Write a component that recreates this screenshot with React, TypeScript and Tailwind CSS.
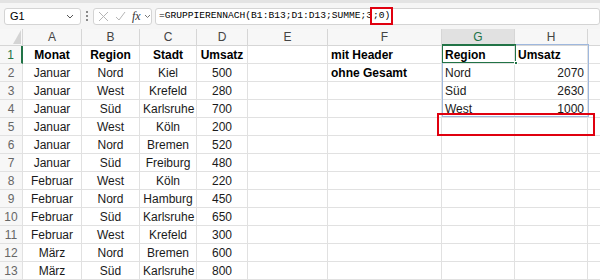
import React from 'react';

const cols = ['A', 'B', 'C', 'D', 'E', 'F', 'G', 'H'];

const rows: string[][] = [
  ['Monat', 'Region', 'Stadt', 'Umsatz', '', 'mit Header', 'Region', 'Umsatz'],
  ['Januar', 'Nord', 'Kiel', '500', '', 'ohne Gesamt', 'Nord', '2070'],
  ['Januar', 'West', 'Krefeld', '280', '', '', 'Süd', '2630'],
  ['Januar', 'Süd', 'Karlsruhe', '700', '', '', 'West', '1000'],
  ['Januar', 'West', 'Köln', '200', '', '', '', ''],
  ['Januar', 'Nord', 'Bremen', '520', '', '', '', ''],
  ['Januar', 'Süd', 'Freiburg', '480', '', '', '', ''],
  ['Februar', 'West', 'Köln', '220', '', '', '', ''],
  ['Februar', 'Nord', 'Hamburg', '450', '', '', '', ''],
  ['Februar', 'Süd', 'Karlsruhe', '650', '', '', '', ''],
  ['Februar', 'West', 'Krefeld', '300', '', '', '', ''],
  ['März', 'Nord', 'Bremen', '600', '', '', '', ''],
  ['März', 'Süd', 'Karlsruhe', '800', '', '', '', ''],
];

const gridCols = 'grid-cols-[23px_59px_58px_57px_51px_80px_114px_73px_73px_12px]';

function cellClass(r: number, c: number) {
  const base = 'h-[18px] border-r border-b border-[#e1e1e1] px-[3px] leading-[18px] whitespace-nowrap overflow-visible';
  if (c <= 3) return `${base} text-center ${r === 0 ? 'font-bold text-black' : 'text-[#1a1a1a]'}`;
  if (c === 5) return `${base} font-bold text-black`;
  if (c === 6) return `${base} ${r === 0 ? 'font-bold text-black' : 'text-[#1a1a1a]'}`;
  if (c === 7) return `${base} ${r === 0 ? 'font-bold text-black' : 'text-right text-[#1a1a1a]'}`;
  return base;
}

export default function App() {
  return (
    <div className="relative w-[600px] h-[280px] overflow-hidden bg-[#f5f5f5] font-['Liberation_Sans',Arial,sans-serif]">
      <div className="h-[3px] bg-[#e3e3e3]" />

      {/* Formula bar */}
      <div className="flex items-center h-[22px] mt-[2px] gap-[3px] pl-[4px]">
        <div className="flex items-center justify-between w-[77px] h-[17px] bg-white border border-[#d4d4d4] rounded-[3px] pl-[5px] pr-[6px] text-[11px] text-black">
          <span>G1</span>
          <svg width="8" height="5" viewBox="0 0 8 5"><path d="M1 1l3 3 3-3" stroke="#555" fill="none" strokeWidth="1" /></svg>
        </div>
        <div className="flex flex-col gap-[2px] px-[2px]">
          <span className="w-[2px] h-[2px] bg-[#666] rounded-full" />
          <span className="w-[2px] h-[2px] bg-[#666] rounded-full" />
          <span className="w-[2px] h-[2px] bg-[#666] rounded-full" />
        </div>
        <div className="flex items-center gap-[6px] w-[59px] h-[17px] bg-white border border-[#d4d4d4] rounded-[3px] pl-[4px]">
          <svg width="11" height="11" viewBox="0 0 11 11"><path d="M1 1l9 9M10 1l-9 9" stroke="#b5b5b5" strokeWidth="1" /></svg>
          <svg width="11" height="11" viewBox="0 0 11 11"><path d="M1 6l3 3 6-8" stroke="#b5b5b5" strokeWidth="1" fill="none" /></svg>
          <span className="italic text-[12px] text-[#333] font-['Liberation_Serif',serif] leading-none">fx</span>
          <svg width="7" height="5" viewBox="0 0 7 5" className="-ml-[3px]"><path d="M1 1l2.5 2.5L6 1" stroke="#777" fill="none" strokeWidth="1" /></svg>
        </div>
        <div className="flex items-center flex-1 h-[17px] bg-white border border-[#d4d4d4] rounded-[3px] pl-[3px] text-[9.6px] text-black font-['Liberation_Mono',monospace]">
          <span>=GRUPPIERENNACH(B1:B13;D1:D13;SUMME;3</span>
          <span className="outline-2 outline-[#e0000f] px-[1px]">;0)</span>
        </div>
      </div>

      {/* Sheet */}
      <div className={`grid ${gridCols} mt-[2px] text-[12px]`}>
        <div className="relative h-[17px] border-r border-b border-[#d6d6d6] bg-[#f7f7f7]">
          <div className="absolute right-[1px] bottom-[1px] w-0 h-0 border-l-[8px] border-l-transparent border-b-[14px] border-b-[#d4d4d4]" />
        </div>
        {cols.map((c) => (
          <div
            key={c}
            className={
              c === 'G'
                ? 'h-[17px] border-r border-[#d6d6d6] border-b-2 border-b-[#217346] bg-[#e1e1e1] text-center text-[12px] leading-[16px] text-[#217346]'
                : 'h-[17px] border-r border-b border-[#d6d6d6] bg-[#f7f7f7] text-center text-[12px] leading-[16px] text-[#444]'
            }
          >
            {c}
          </div>
        ))}
        <div className="h-[17px] border-b border-[#d6d6d6] bg-[#f7f7f7]" />

        {rows.map((row, r) => (
          <React.Fragment key={r}>
            <div
              className={
                r === 0
                  ? 'h-[18px] bg-[#f7f7f7] border-r-2 border-r-[#217346] border-b border-[#e1e1e1] text-center text-[12px] leading-[18px] text-[#217346]'
                  : 'h-[18px] bg-[#f7f7f7] border-r border-b border-[#e1e1e1] text-center text-[12px] leading-[18px] text-[#666]'
              }
            >
              {r + 1}
            </div>
            {row.map((v, c) => (
              <div key={c} className={`${cellClass(r, c)} bg-white`}>
                {v}
              </div>
            ))}
            <div className="h-[18px] border-b border-[#e1e1e1] bg-white" />
          </React.Fragment>
        ))}
        <div className="h-[10px] bg-[#f7f7f7] border-r border-[#e1e1e1]" />
        {cols.map((c) => (
          <div key={c} className="h-[10px] bg-white border-r border-[#e1e1e1]" />
        ))}
        <div className="h-[10px] bg-white" />
      </div>

      {/* spill range border */}
      <div className="absolute left-[442px] top-[44px] w-[147px] h-[73px] border border-[#9fb8de] pointer-events-none" />
      {/* active cell */}
      <div className="absolute left-[442px] top-[44px] w-[74px] h-[19px] border border-[#217346] pointer-events-none">
        <div className="absolute -right-[3px] -bottom-[3px] w-[4px] h-[4px] bg-[#217346] border border-white" />
      </div>
      {/* red highlight */}
      <div className="absolute left-[437px] top-[113px] w-[158px] h-[23px] border-2 border-[#e0000f] pointer-events-none" />
    </div>
  );
}
